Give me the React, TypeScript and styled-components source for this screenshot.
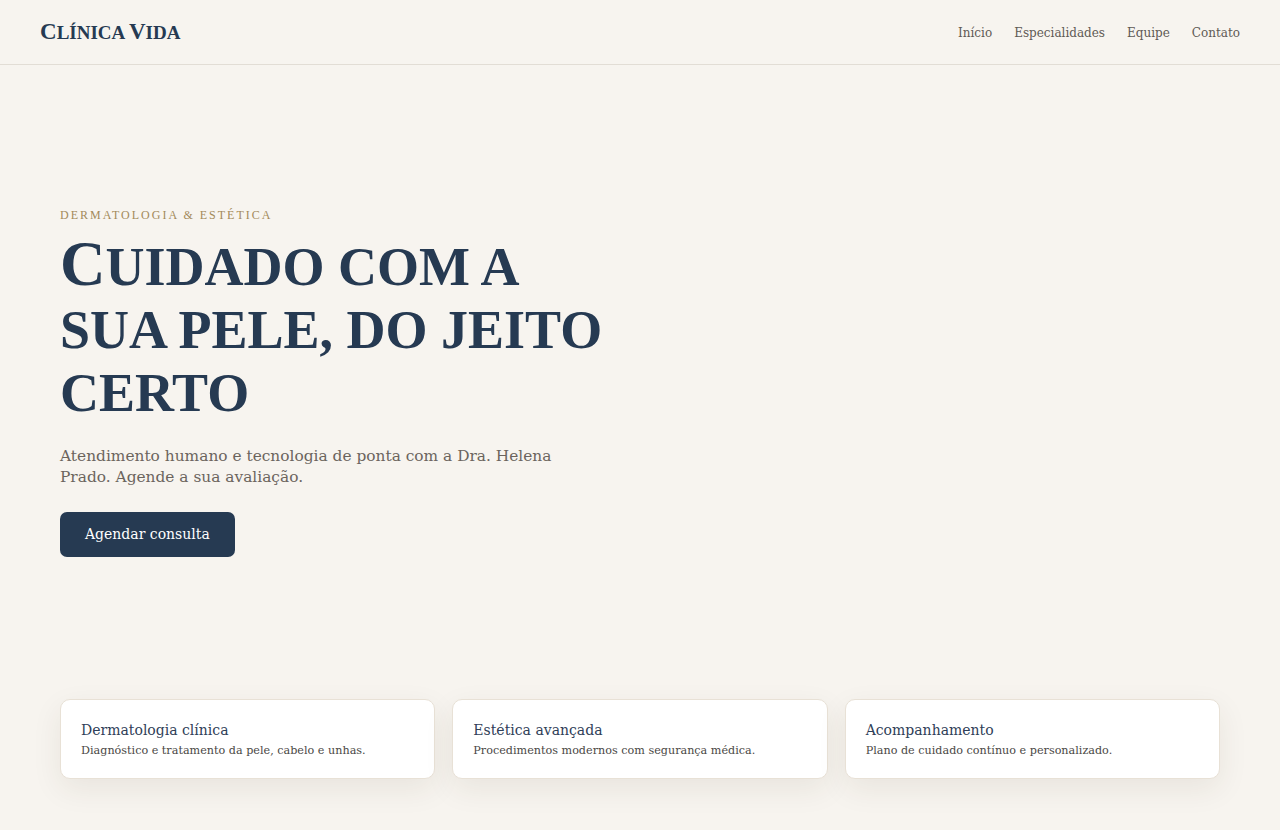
import styled, { createGlobalStyle } from 'styled-components';

const GlobalStyle = createGlobalStyle`
  * {
    box-sizing: border-box;
  }

  body {
    margin: 0;
    background: #f7f4ef;
    font-family: 'DejaVu Serif', Georgia, serif;
    color: #263a52;
  }
`;

const Page = styled.div`
  display: flex;
  flex-direction: column;
  min-height: 100vh;
  background: #f7f4ef;
`;

const Header = styled.header`
  display: flex;
  align-items: center;
  justify-content: space-between;
  height: 65px;
  padding: 0 40px;
  border-bottom: 1px solid #e2ddd5;
`;

// Capitals get a bigger size inside uppercase "small caps" text
const Cap = styled.span<{ $size: number }>`
  font-size: ${({ $size }) => $size}px;
`;

const Logo = styled.a`
  font-family: 'Liberation Serif', 'Times New Roman', serif;
  font-weight: 700;
  font-size: 19px;
  line-height: 24px;
  text-transform: uppercase;
  color: #263a52;
  text-decoration: none;
`;

const Nav = styled.nav`
  display: flex;
  gap: 22px;
  padding-top: 2px;
`;

const NavLink = styled.a`
  font-size: 12px;
  color: #5f5a55;
  text-decoration: none;
`;

const Hero = styled.main`
  flex: 1;
  display: flex;
  flex-direction: column;
  justify-content: center;
  padding: 0 60px;
`;

const HeroContent = styled.div`
  display: flex;
  flex-direction: column;
  align-items: flex-start;
  max-width: 560px;
`;

const Eyebrow = styled.p`
  margin: 0 0 10px;
  font-family: 'Liberation Serif', 'Times New Roman', serif;
  font-size: 12px;
  letter-spacing: 2px;
  text-transform: uppercase;
  color: #a38a5a;
`;

const Title = styled.h1`
  margin: 0;
  font-family: 'Liberation Serif', 'Times New Roman', serif;
  font-weight: 700;
  font-size: 54px;
  line-height: 63px;
  text-transform: uppercase;
  color: #263a52;
`;

const Lead = styled.p`
  margin: 21px 0 24px;
  max-width: 500px;
  font-size: 15.4px;
  line-height: 21px;
  color: #6b645d;
`;

const Button = styled.button`
  height: 45px;
  padding: 0 25px;
  border: none;
  border-radius: 7px;
  background: #263a52;
  color: #fff;
  font-family: 'DejaVu Serif', Georgia, serif;
  font-size: 14px;
  cursor: pointer;
`;

const Cards = styled.section`
  display: grid;
  grid-template-columns: repeat(3, 1fr);
  gap: 17px;
  padding: 0 60px 51px;
`;

const Card = styled.article`
  height: 80px;
  padding: 22px 20px;
  background: #fff;
  border: 1px solid #e8e1d6;
  border-radius: 10px;
  box-shadow: 0 10px 30px rgba(60, 45, 25, 0.08);
`;

const CardTitle = styled.h3`
  margin: 0 0 6px;
  font-size: 14px;
  font-weight: 400;
  color: #2f4058;
`;

const CardText = styled.p`
  margin: 0;
  font-size: 11.2px;
  color: #4a4845;
`;

const services = [
  { title: 'Dermatologia clínica', text: 'Diagnóstico e tratamento da pele, cabelo e unhas.' },
  { title: 'Estética avançada', text: 'Procedimentos modernos com segurança médica.' },
  { title: 'Acompanhamento', text: 'Plano de cuidado contínuo e personalizado.' },
];

export default function App() {
  return (
    <Page>
      <GlobalStyle />
      <Header>
        <Logo href="#">
          <Cap $size={23}>C</Cap>línica <Cap $size={23}>V</Cap>ida
        </Logo>
        <Nav>
          <NavLink href="#">Início</NavLink>
          <NavLink href="#">Especialidades</NavLink>
          <NavLink href="#">Equipe</NavLink>
          <NavLink href="#">Contato</NavLink>
        </Nav>
      </Header>

      <Hero>
        <HeroContent>
          <Eyebrow>Dermatologia &amp; Estética</Eyebrow>
          <Title>
            <Cap $size={63}>C</Cap>uidado com a sua pele, do jeito certo
          </Title>
          <Lead>
            Atendimento humano e tecnologia de ponta com a Dra. Helena Prado. Agende a sua avaliação.
          </Lead>
          <Button>Agendar consulta</Button>
        </HeroContent>
      </Hero>

      <Cards>
        {services.map((s) => (
          <Card key={s.title}>
            <CardTitle>{s.title}</CardTitle>
            <CardText>{s.text}</CardText>
          </Card>
        ))}
      </Cards>
    </Page>
  );
}
